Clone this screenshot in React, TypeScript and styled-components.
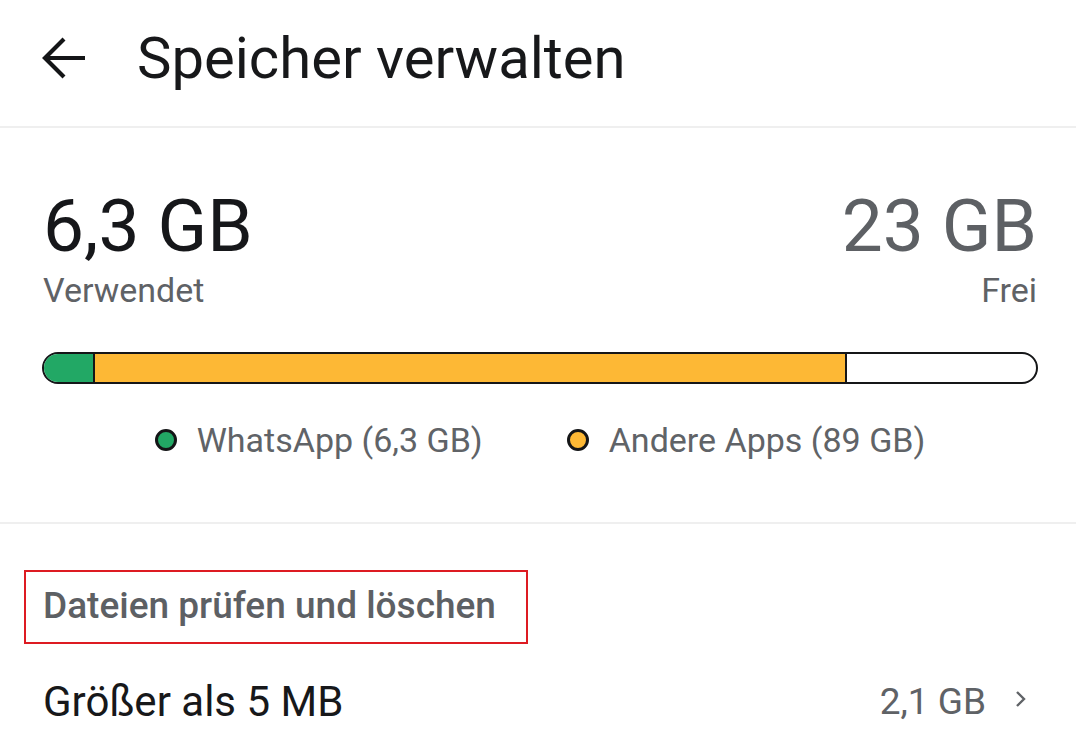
import React from "react";
import styled, { createGlobalStyle } from "styled-components";

const Global = createGlobalStyle`
  html, body { margin: 0; padding: 0; background: #ffffff; }
  body { font-family: Roboto, "Noto Sans", "Liberation Sans", sans-serif; -webkit-font-smoothing: antialiased; }
  * { box-sizing: border-box; }
`;

const Page = styled.div`
  width: 1076px;
  height: 746px;
  overflow: hidden;
  background: #fff;
`;

const Header = styled.header`
  height: 128px;
  display: flex;
  align-items: center;
  padding: 0 0 10px 40px;
  border-bottom: 2px solid #efefef;
`;

const BackButton = styled.button`
  border: none;
  background: none;
  padding: 0;
  width: 48px;
  height: 48px;
  display: flex;
  align-items: center;
  justify-content: center;
  margin-right: 49px;
  color: #1a1a1a;
`;

const Title = styled.h1`
  margin: 0;
  font-size: 58px;
  font-weight: 400;
  color: #17181a;
  letter-spacing: 0;
`;

const Summary = styled.section`
  padding: 58px 39px 0 43px;
  height: 396px;
  border-bottom: 2px solid #efefef;
`;

const Totals = styled.div`
  display: flex;
  justify-content: space-between;
`;

const TotalCol = styled.div<{ $align: "left" | "right" }>`
  display: flex;
  flex-direction: column;
  align-items: ${(p) => (p.$align === "left" ? "flex-start" : "flex-end")};
`;

const BigNumber = styled.div<{ $muted?: boolean }>`
  font-size: 73px;
  line-height: 80px;
  color: ${(p) => (p.$muted ? "#5d6064" : "#16171a")};
`;

const SubLabel = styled.div`
  font-size: 34px;
  line-height: 40px;
  color: #5f6266;
  margin-top: 4px;
`;

const Bar = styled.div`
  margin-top: 42px;
  margin-left: -1px;
  margin-right: -1px;
  height: 32px;
  border: 2.5px solid #151618;
  border-radius: 16px;
  overflow: hidden;
  display: flex;
  background: #fff;
`;

const Segment = styled.div<{ $color: string }>`
  background: ${(p) => p.$color};
  border-right: 2.5px solid #151618;
  height: 100%;
`;

const Legend = styled.div`
  display: flex;
  justify-content: center;
  gap: 84px;
  margin-top: 36px;
  padding-left: 0px;
`;

const LegendItem = styled.div`
  display: flex;
  align-items: center;
  gap: 20px;
  font-size: 34px;
  line-height: 40px;
  color: #606367;
`;

const Dot = styled.span<{ $color: string }>`
  width: 22px;
  height: 22px;
  border-radius: 50%;
  background: ${(p) => p.$color};
  border: 3px solid #141517;
  flex: none;
`;

const Section = styled.section`
  padding: 46px 40px 0 24px;
`;

const SectionHeader = styled.div`
  display: inline-flex;
  align-items: center;
  width: 504px;
  height: 74px;
  border: 2px solid #dd1b22;
  padding-left: 17px;
  padding-bottom: 4px;
  font-size: 37px;
  font-weight: 500;
  color: #5d6064;
`;

const Row = styled.div`
  display: flex;
  align-items: center;
  justify-content: space-between;
  margin-top: 27px;
  padding-left: 19px;
  height: 60px;
`;

const RowLabel = styled.div`
  font-size: 42px;
  color: #17181a;
`;

const RowRight = styled.div`
  display: flex;
  align-items: center;
  gap: 28px;
  font-size: 37px;
  color: #5f6266;
`;

const Chevron = styled.svg`
  width: 14px;
  height: 20px;
  margin-right: 8px;
  margin-top: -4px;
`;

export default function App() {
  return (
    <Page>
      <Global />
      <Header>
        <BackButton aria-label="Zurück">
          <svg width="46" height="44" viewBox="0 0 46 44" fill="none">
            <path d="M44 22H4M23 3L4 22L23 41" stroke="#141517" strokeWidth="4.2" strokeLinecap="butt" strokeLinejoin="miter" />
          </svg>
        </BackButton>
        <Title>Speicher verwalten</Title>
      </Header>
      <Summary>
        <Totals>
          <TotalCol $align="left">
            <BigNumber>6,3 GB</BigNumber>
            <SubLabel>Verwendet</SubLabel>
          </TotalCol>
          <TotalCol $align="right">
            <BigNumber $muted>23 GB</BigNumber>
            <SubLabel>Frei</SubLabel>
          </TotalCol>
        </Totals>
        <Bar>
          <Segment $color="#22a865" style={{ width: 51 }} />
          <Segment $color="#fdb835" style={{ width: 752 }} />
        </Bar>
        <Legend>
          <LegendItem>
            <Dot $color="#22a865" />
            WhatsApp (6,3 GB)
          </LegendItem>
          <LegendItem>
            <Dot $color="#fdb835" />
            Andere Apps (89 GB)
          </LegendItem>
        </Legend>
      </Summary>
      <Section>
        <SectionHeader>Dateien prüfen und löschen</SectionHeader>
        <Row>
          <RowLabel>Größer als 5 MB</RowLabel>
          <RowRight>
            2,1 GB
            <Chevron viewBox="0 0 14 20">
              <path d="M3 3L10 10L3 17" stroke="#606367" strokeWidth="2.4" fill="none" />
            </Chevron>
          </RowRight>
        </Row>
      </Section>
    </Page>
  );
}
